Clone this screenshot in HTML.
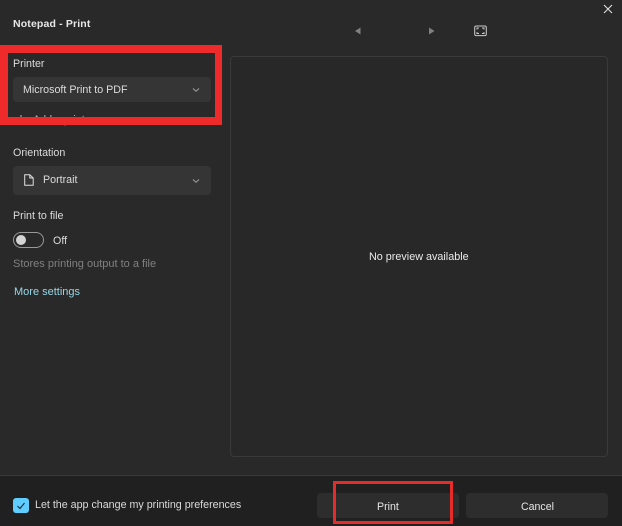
<!DOCTYPE html>
<html><head><meta charset="utf-8">
<style>
html,body{margin:0;padding:0;background:#292929;}
#r{position:relative;width:622px;height:526px;overflow:hidden;background:#292929;font-family:"Liberation Sans",sans-serif;color:#e6e6e6;filter:blur(.3px);}
.t{position:absolute;white-space:nowrap;font-size:10.7px;line-height:14px;}
.b{position:absolute;box-sizing:border-box;}
svg{position:absolute;overflow:visible;}
</style></head>
<body><div id="r">
<div class="t" style="left:13px;top:17px;font-weight:bold;font-size:10.5px;letter-spacing:.15px;color:#e8e8e8;">Notepad - Print</div>

<div class="b" style="left:230px;top:56px;width:378px;height:401px;border:1px solid #3a3a3a;border-radius:4px;background:#282828;"></div>
<div class="t" style="left:369px;top:250px;color:#eaeaea;font-size:10.8px;">No preview available</div>

<div class="b" style="left:13px;top:77px;width:198px;height:25px;background:#353535;border-radius:4px;"></div>
<div class="t" style="left:13px;top:57px;color:#dcdcdc;">Printer</div>
<div class="t" style="left:23px;top:83px;color:#dcdcdc;">Microsoft Print to PDF</div>
<svg style="left:192px;top:87px" width="8" height="6"><path d="M1 1.5L4 4.3L7 1.5" fill="none" stroke="#aaa" stroke-width=".9"/></svg>
<svg style="left:17px;top:114px" width="8" height="8"><path d="M4 1V7M1 4H7" stroke="#bbb" stroke-width="1"/></svg>
<div class="t" style="left:33px;top:113px;color:#bbb;">Add a printer</div>

<div class="b" style="left:0;top:45px;width:222px;height:80px;border-style:solid;border-color:#ee2a2a;border-width:8px 7px 8px 8px;"></div>

<div class="t" style="left:13px;top:146px;color:#dcdcdc;">Orientation</div>
<div class="b" style="left:13px;top:166px;width:198px;height:29px;background:#353535;border-radius:4px;"></div>
<svg style="left:24px;top:174px" width="10" height="12"><path d="M0.7 0.7H5.8L9.2 4V11.3H0.7ZM5.8 0.7V4H9.2" fill="none" stroke="#e0e0e0" stroke-width="1"/></svg>
<div class="t" style="left:43px;top:173px;color:#dcdcdc;">Portrait</div>
<svg style="left:192px;top:178px" width="8" height="6"><path d="M1 1.5L4 4.3L7 1.5" fill="none" stroke="#aaa" stroke-width=".9"/></svg>

<div class="t" style="left:13px;top:209px;color:#dcdcdc;">Print to file</div>
<div class="b" style="left:13px;top:232px;width:31px;height:16px;border:1px solid #999;border-radius:8px;"></div>
<div class="b" style="left:16px;top:235px;width:10px;height:10px;background:#d4d4d4;border-radius:50%;"></div>
<div class="t" style="left:53px;top:234px;color:#dcdcdc;">Off</div>
<div class="t" style="left:13px;top:257px;font-size:11px;color:#808080;">Stores printing output to a file</div>
<div class="t" style="left:14px;top:285px;font-size:11px;color:#98d6e6;">More settings</div>

<svg style="left:352px;top:26px" width="10" height="10"><path d="M8.5 1.5V8.5L3 5Z" fill="#808080"/></svg>
<svg style="left:427px;top:26px" width="10" height="10"><path d="M2 1.5V8.5L7.5 5Z" fill="#808080"/></svg>
<svg style="left:474px;top:25px" width="14" height="12"><rect x="0.7" y="1" width="11.6" height="9.6" rx="1.5" fill="none" stroke="#ccc" stroke-width="1"/><path d="M3 4.5V3H5M8 3H10V4.5M10 7V8.5H8M5 8.5H3V7" fill="none" stroke="#ccc" stroke-width="1"/></svg>
<svg style="left:603px;top:4px" width="10" height="10"><path d="M1 1L9 9M9 1L1 9" stroke="#e6e6e6" stroke-width="1"/></svg>

<div class="b" style="left:0;top:475px;width:622px;height:51px;background:#202020;border-top:1px solid #3a3a3a;"></div>
<div class="b" style="left:13px;top:498px;width:16px;height:15px;background:#60cdff;border-radius:3px;"></div>
<svg style="left:13px;top:498px" width="16" height="15"><path d="M4.5 8L7 10.5L11.5 5" fill="none" stroke="#1c2a33" stroke-width="1.1"/></svg>
<div class="t" style="left:35px;top:498px;color:#dadada;">Let the app change my printing preferences</div>

<div class="b" style="left:317px;top:493px;width:142px;height:25px;background:#2d2d2d;border-radius:4px;"></div>
<div class="b" style="left:466px;top:493px;width:142px;height:25px;background:#2d2d2d;border-radius:4px;"></div>
<div class="b" style="left:333px;top:481px;width:120px;height:43px;border:3.5px solid #e62b2b;"></div>
<div class="t" style="left:377px;top:500px;font-size:10.6px;color:#e6e6e6;">Print</div>
<div class="t" style="left:521px;top:500px;font-size:10.6px;color:#e6e6e6;">Cancel</div>
</div></body></html>
